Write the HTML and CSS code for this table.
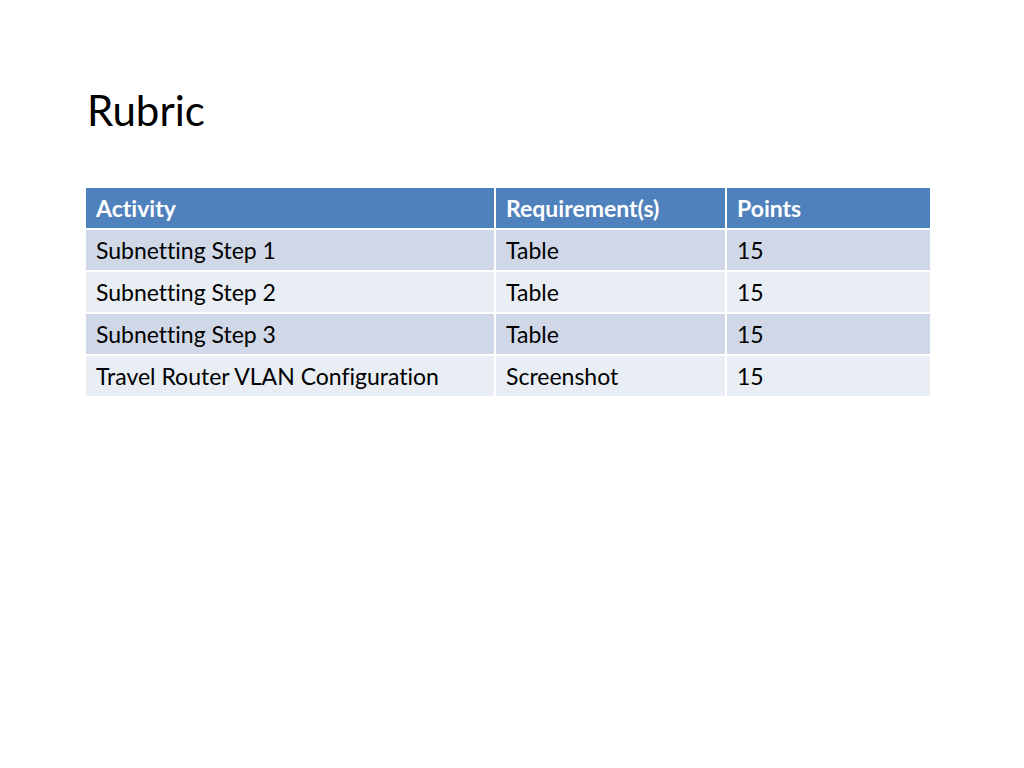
FILE: index.html
```html
<!DOCTYPE html>
<html lang="en">
<head>
<meta charset="utf-8">
<title>Rubric</title>
<link rel="stylesheet" href="styles.css">
</head>
<body>
<div class="slide">
  <h1 class="title">Rubric</h1>
  <table class="rubric">
    <colgroup>
      <col class="c1"><col class="c2"><col class="c3">
    </colgroup>
    <thead>
      <tr><th>Activity</th><th>Requirement(s)</th><th>Points</th></tr>
    </thead>
    <tbody>
      <tr class="odd"><td>Subnetting Step 1</td><td>Table</td><td>15</td></tr>
      <tr class="even"><td>Subnetting Step 2</td><td>Table</td><td>15</td></tr>
      <tr class="odd"><td>Subnetting Step 3</td><td>Table</td><td>15</td></tr>
      <tr class="even"><td>Travel Router VLAN Configuration</td><td>Screenshot</td><td>15</td></tr>
    </tbody>
  </table>
</div>
</body>
</html>
```
FILE: styles.css
```css
html, body {
  margin: 0;
  padding: 0;
  background: #ffffff;
}
.slide {
  width: 1024px;
  height: 768px;
  box-sizing: border-box;
  padding: 84px 0 0 84px;
  font-family: "Lato", "Open Sans", sans-serif;
  font-variant-ligatures: none;
  color: #000;
}
.title {
  margin: 0 0 0 3px;
  font-weight: 400;
  font-size: 42px;
  line-height: 52px;
}
.rubric {
  margin-top: 50px;
  border-collapse: separate;
  border-spacing: 2px 2px;
  width: 848px;
  table-layout: fixed;
  font-size: 23px;
}
.c1 { width: 408px; }
.c2 { width: 229px; }
.c3 { width: 203px; }
.rubric th,
.rubric td {
  height: 40px;
  padding: 0 0 0 10px;
  text-align: left;
  vertical-align: middle;
  box-sizing: border-box;
  white-space: nowrap;
}
.rubric th {
  background: #4f81bd;
  color: #ffffff;
  font-weight: 700;
}
.rubric tr.odd td { background: #d0d8e8; }
.rubric tr.even td { background: #e9edf4; }
```
